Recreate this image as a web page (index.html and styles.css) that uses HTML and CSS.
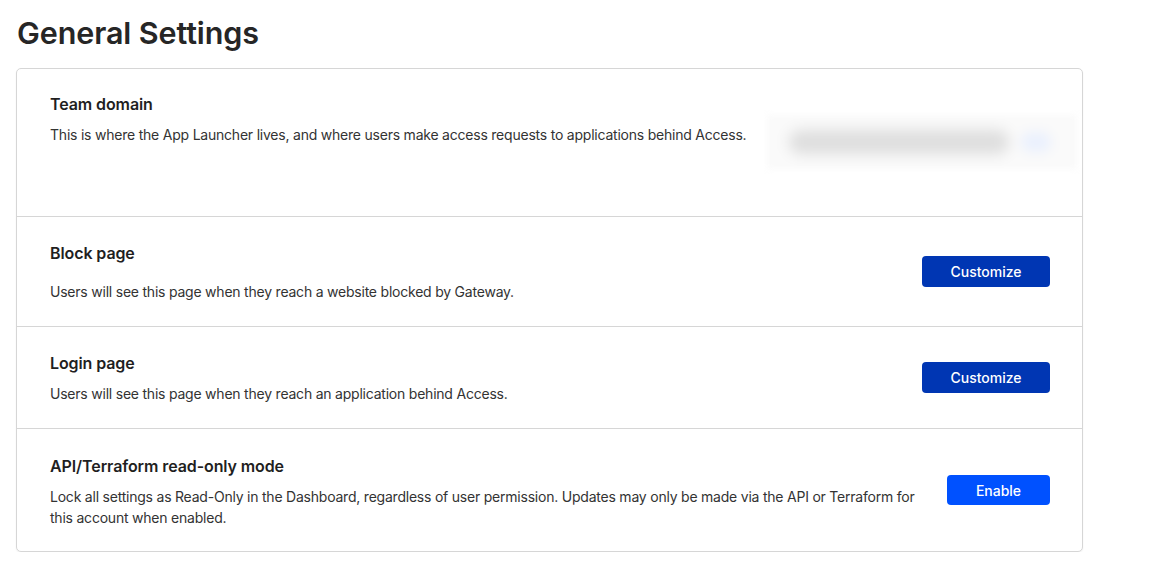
FILE: index.html
```html
<!DOCTYPE html>
<html>
<head>
<meta charset="utf-8">
<link rel="stylesheet" href="styles.css">
</head>
<body>
<main class="page">
  <h1 class="page-title">General Settings</h1>
  <section class="card">
    <div class="row row-domain">
      <div class="row-text">
        <h2 class="row-title">Team domain</h2>
        <p class="row-desc nowrap">This is where the App Launcher lives, and where users make access requests to applications behind Access.</p>
      </div>
      <div class="domain-blur">
        <div class="blur-bar"></div>
        <div class="blur-dot"></div>
      </div>
    </div>
    <div class="row row-block">
      <div class="row-text">
        <h2 class="row-title">Block page</h2>
        <p class="row-desc">Users will see this page when they reach a website blocked by Gateway.</p>
      </div>
      <button class="btn btn-dark">Customize</button>
    </div>
    <div class="row row-login">
      <div class="row-text">
        <h2 class="row-title">Login page</h2>
        <p class="row-desc">Users will see this page when they reach an application behind Access.</p>
      </div>
      <button class="btn btn-dark">Customize</button>
    </div>
    <div class="row row-api">
      <div class="row-text">
        <h2 class="row-title">API/Terraform read-only mode</h2>
        <p class="row-desc">Lock all settings as Read-Only in the Dashboard, regardless of user permission. Updates may only be made via the API or Terraform for this account when enabled.</p>
      </div>
      <button class="btn btn-bright">Enable</button>
    </div>
  </section>
</main>
</body>
</html>
```
FILE: styles.css
```css
* { box-sizing: border-box; }
html, body { margin: 0; padding: 0; background: #fff; }
body {
  font-family: Inter, "Noto Sans", sans-serif;
  color: #222;
  -webkit-font-smoothing: antialiased;
}
.page {
  padding: 14px 0 0 16px;
  width: 1083px;
}
.page-title {
  margin: 0 0 0 1px;
  font-size: 30.5px;
  line-height: 38px;
  font-weight: 600;
  color: #262626;
  letter-spacing: -0.1px;
}
.card {
  margin-top: 16px;
  border: 1px solid #d6d6d6;
  border-radius: 5px;
  box-shadow: 0 1px 2px rgba(0,0,0,0.06);
  background: #fff;
}
.row {
  display: flex;
  align-items: center;
  justify-content: space-between;
  padding: 0 32px 0 33px;
  border-top: 1px solid #d6d6d6;
}
.row:first-child { border-top: none; }
.row-text { flex: 1; min-width: 0; }
.row-title {
  margin: 0;
  font-size: 16px;
  line-height: 22px;
  font-weight: 600;
  color: #1f1f1f;
  letter-spacing: -0.1px;
}
.row-desc {
  margin: 9px 0 0;
  font-size: 14px;
  line-height: 21px;
  color: #333;
  letter-spacing: -0.22px;
}
.nowrap { white-space: nowrap; }
.row-domain {
  height: 147px;
  align-items: flex-start;
  padding-top: 24px;
}
.domain-blur {
  width: 310px;
  height: 54px;
  margin-top: 22px;
  margin-right: -27px;
  background: #fafafa;
  filter: blur(3px);
  display: flex;
  align-items: center;
  padding-left: 22px;
  gap: 12px;
  flex: none;
}
.blur-bar {
  width: 220px;
  height: 24px;
  background: #dedede;
  border-radius: 12px;
  filter: blur(6px);
}
.blur-dot {
  width: 30px;
  height: 20px;
  background: #eaf0fd;
  border-radius: 10px;
  filter: blur(5px);
}
.row-block { height: 110px; }
.row-block .row-desc { margin-top: 17px; }
.row-login { height: 102px; }
.row-api { height: 123px; }
.row-api .row-title { margin-top: 2px; }
.row-api .row-desc { max-width: 880px; }
.btn {
  font-family: Inter, "Noto Sans", sans-serif;
  font-size: 14px;
  font-weight: 500;
  color: #fff;
  border: none;
  border-radius: 4px;
  height: 31px;
  cursor: pointer;
  flex: none;
}
.btn-dark {
  background: #0036b3;
  width: 128px;
}
.btn-bright {
  background: #0051ff;
  width: 103px;
  height: 30px;
  margin-left: 28px;
}
```
